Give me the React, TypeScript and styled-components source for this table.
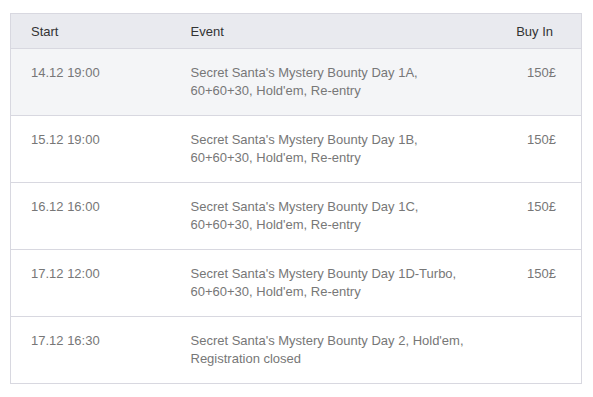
import React from 'react'
import styled, { createGlobalStyle } from 'styled-components'

const GlobalStyle = createGlobalStyle`
  body {
    margin: 0;
    background: #fff;
    font-family: 'Liberation Sans', Arial, sans-serif;
  }
`

const Wrapper = styled.div`
  padding: 13px 11px 0 10px;
`

const Table = styled.table`
  width: 100%;
  table-layout: fixed;
  border-collapse: collapse;
  border: 1px solid #d8d8e0;
  font-size: 13px;
`

const HeadCell = styled.th<{ $right?: boolean }>`
  background: #e9eaef;
  color: #333;
  font-weight: normal;
  white-space: nowrap;
  height: 34px;
  padding: 0 ${p => (p.$right ? '28px' : '20px')} 0 20px;
  text-align: ${p => (p.$right ? 'right' : 'left')};
  border-bottom: 1px solid #d8d8e0;
`

const Row = styled.tr<{ $active?: boolean }>`
  background: ${p => (p.$active ? '#f4f5f7' : '#fff')};
  border-bottom: 1px solid #d8d8e0;
`

const Cell = styled.td<{ $right?: boolean }>`
  color: #777;
  vertical-align: top;
  line-height: 18px;
  height: 67px;
  box-sizing: border-box;
  padding: 15px ${p => (p.$right ? '25px' : '20px')} 0 20px;
  text-align: ${p => (p.$right ? 'right' : 'left')};
`

const events = [
  { start: '14.12 19:00', name: "Secret Santa's Mystery Bounty Day 1A,", sub: "60+60+30, Hold'em, Re-entry", buyIn: '150£' },
  { start: '15.12 19:00', name: "Secret Santa's Mystery Bounty Day 1B,", sub: "60+60+30, Hold'em, Re-entry", buyIn: '150£' },
  { start: '16.12 16:00', name: "Secret Santa's Mystery Bounty Day 1C,", sub: "60+60+30, Hold'em, Re-entry", buyIn: '150£' },
  { start: '17.12 12:00', name: "Secret Santa's Mystery Bounty Day 1D-Turbo,", sub: "60+60+30, Hold'em, Re-entry", buyIn: '150£' },
  { start: '17.12 16:30', name: "Secret Santa's Mystery Bounty Day 2, Hold'em,", sub: 'Registration closed', buyIn: '' },
]

export default function App() {
  return (
    <>
      <GlobalStyle />
      <Wrapper>
        <Table>
          <colgroup>
            <col style={{ width: 160 }} />
            <col style={{ width: 320 }} />
            <col />
          </colgroup>
          <thead>
            <tr>
              <HeadCell>Start</HeadCell>
              <HeadCell>Event</HeadCell>
              <HeadCell $right>Buy In</HeadCell>
            </tr>
          </thead>
          <tbody>
            {events.map((e, i) => (
              <Row key={e.start} $active={i === 0}>
                <Cell>{e.start}</Cell>
                <Cell>
                  {e.name}
                  <br />
                  {e.sub}
                </Cell>
                <Cell $right>{e.buyIn}</Cell>
              </Row>
            ))}
          </tbody>
        </Table>
      </Wrapper>
    </>
  )
}
